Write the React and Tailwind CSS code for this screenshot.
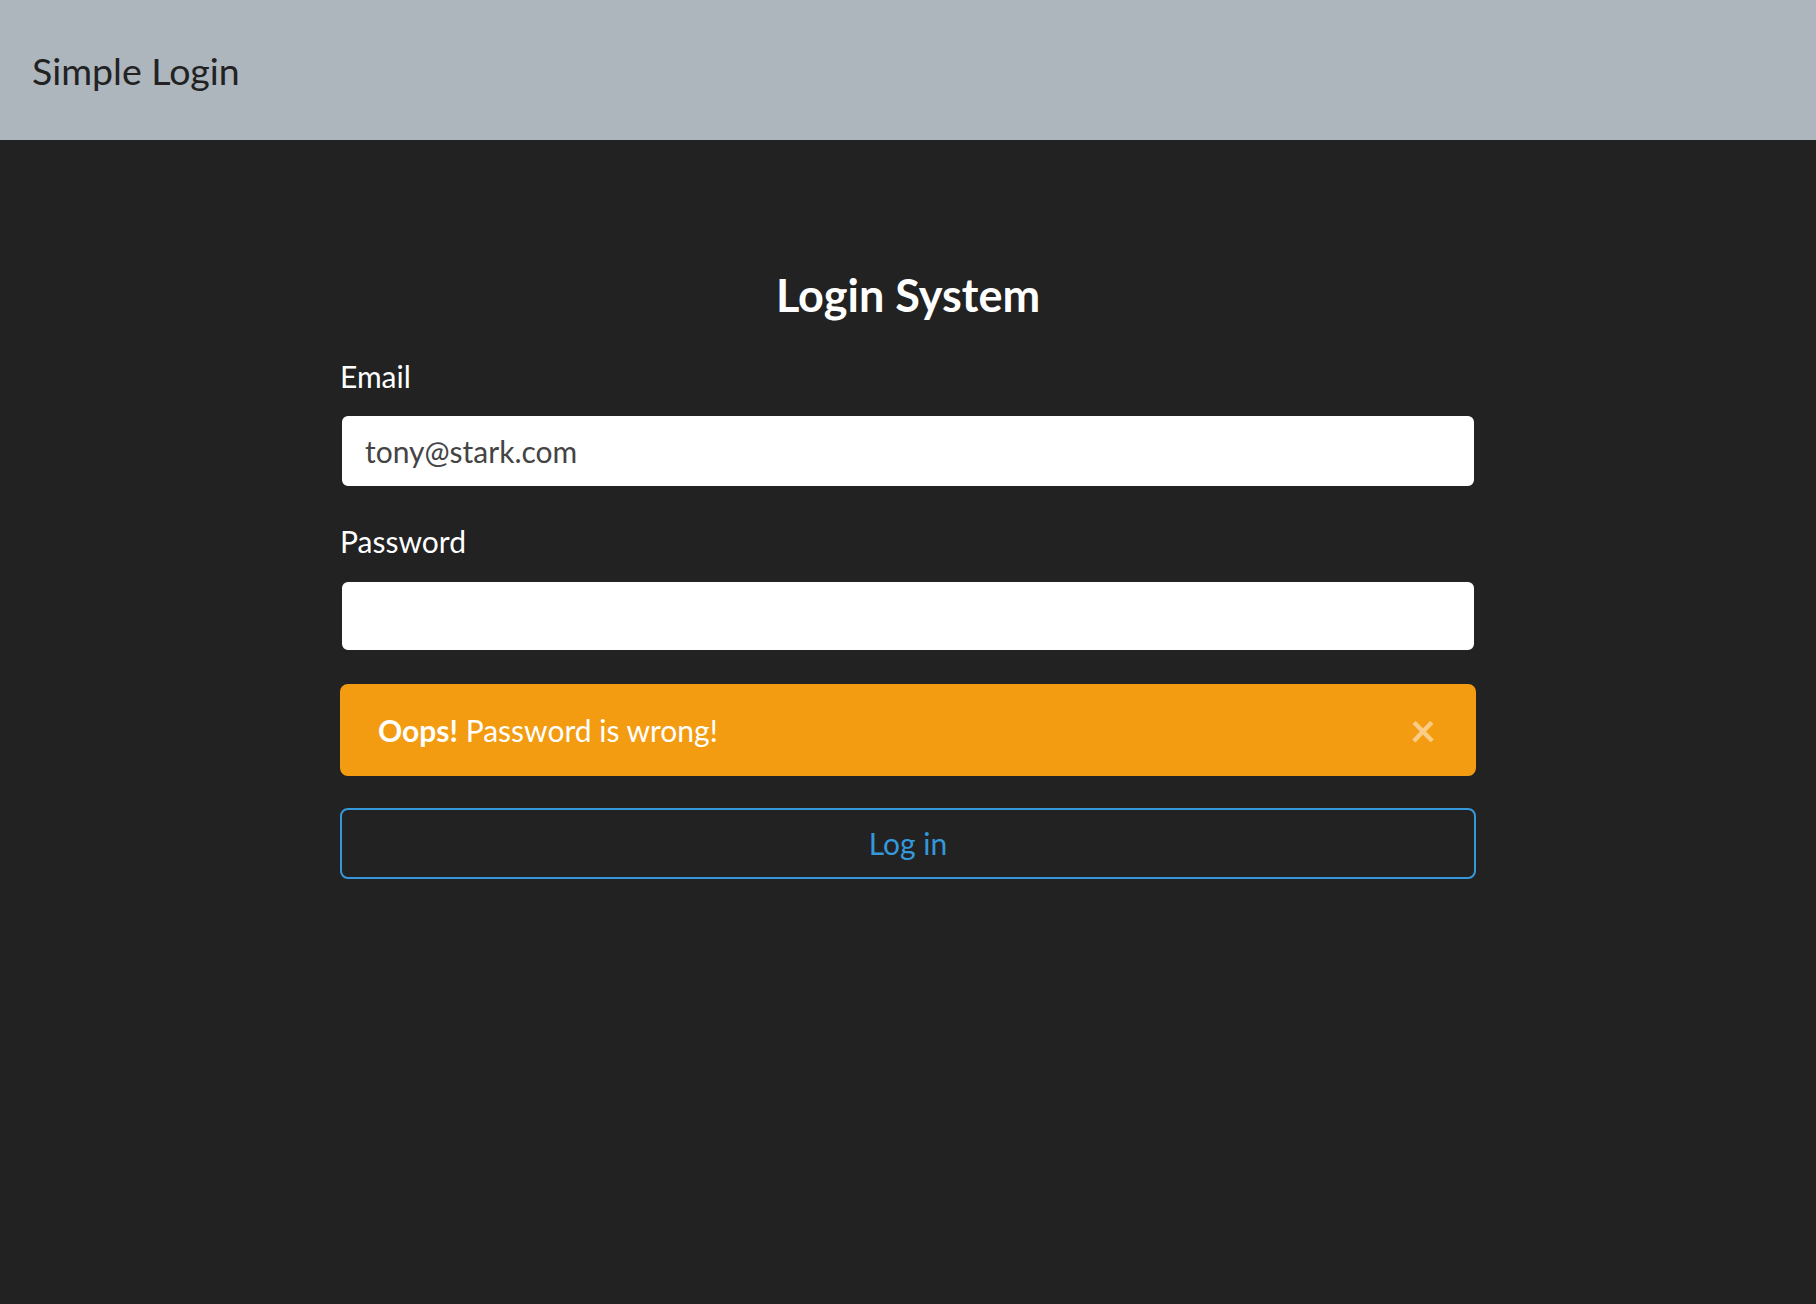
import React, { useState } from 'react';

const App = () => {
    const [email, setEmail] = useState('tony@stark.com');
    const [password, setPassword] = useState('');
    const [showAlert, setShowAlert] = useState(true);

    return (
        <div className="min-h-screen bg-[#222222] font-['Lato',_'Open_Sans',_sans-serif]">
            <header className="h-[140px] bg-[#adb5bd] flex items-center pl-[32px]">
                <span className="text-[37.5px] leading-[45px] text-[#222222]">Simple Login</span>
            </header>

            <main className="w-[1136px] mx-auto pt-[128px]">
                <h4 className="text-center text-white font-bold text-[45px] leading-[54px] mb-[32px]">Login System</h4>

                <div>
                    <label className="block text-white text-[30px] leading-[45px] mb-[15px]">Email</label>
                    <input
                        type="email"
                        value={email}
                        onChange={(e) => setEmail(e.target.value)}
                        className="block w-full h-[74px] bg-white border-2 border-[#222222] rounded-[8px] pl-[23px] pr-[22px] text-[30px] text-[#444444] outline-none"
                    />
                </div>

                <div className="mt-[31px]">
                    <label className="block text-white text-[30px] leading-[45px] mb-[16px]">Password</label>
                    <input
                        type="password"
                        value={password}
                        onChange={(e) => setPassword(e.target.value)}
                        className="block w-full h-[72px] bg-white border-2 border-[#222222] rounded-[8px] pl-[23px] pr-[22px] text-[30px] text-[#444444] outline-none"
                    />
                </div>

                {showAlert && (
                    <div className="mt-[32px] h-[92px] bg-[#f39c12] rounded-[8px] flex items-center justify-between pl-[38px] pr-[40px] text-white text-[30px] leading-[45px]">
                        <span><strong className="font-bold">Oops!</strong> Password is wrong!</span>
                        <button
                            onClick={() => setShowAlert(false)}
                            className="text-white/50 font-bold text-[45px] leading-[45px]"
                        >
                            ×
                        </button>
                    </div>
                )}

                <button className="mt-[32px] w-full h-[71px] border-2 border-[#3498db] rounded-[8px] text-[#3498db] text-[30px] leading-[45px]">
                    Log in
                </button>
            </main>
        </div>
    );
};

export default App;
